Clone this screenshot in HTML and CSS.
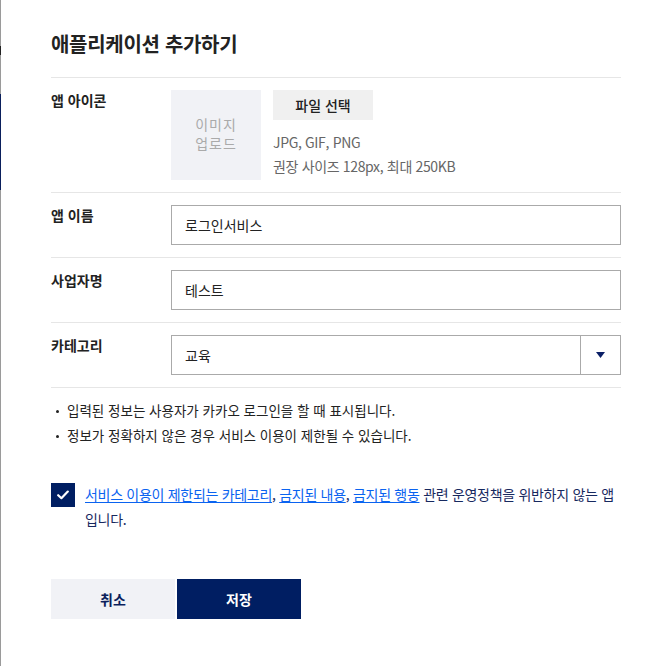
FILE: index.html
```html
<!DOCTYPE html>
<html lang="ko">
<head>
<meta charset="utf-8">
<title>애플리케이션 추가하기</title>
<link rel="stylesheet" href="styles.css">
</head>
<body>
<div class="page">
  <div class="edge"></div>
  <div class="modal">
    <h1 class="title">애플리케이션 추가하기</h1>

    <div class="row">
      <div class="label">앱 아이콘</div>
      <div class="field icon-field">
        <div class="upload">이미지<br>업로드</div>
        <div class="file-info">
          <button class="file-btn" type="button">파일 선택</button>
          <p class="hint">JPG, GIF, PNG<br>권장 사이즈 128px, 최대 250KB</p>
        </div>
      </div>
    </div>

    <div class="row">
      <div class="label">앱 이름</div>
      <div class="field"><div class="input">로그인서비스</div></div>
    </div>

    <div class="row">
      <div class="label">사업자명</div>
      <div class="field"><div class="input">테스트</div></div>
    </div>

    <div class="row">
      <div class="label">카테고리</div>
      <div class="field">
        <div class="select">
          <span class="select-value">교육</span>
          <span class="select-arrow"><svg width="9" height="6" viewBox="0 0 9 6"><path d="M0 0H9L4.5 6Z" fill="#0a1f66"/></svg></span>
        </div>
      </div>
    </div>

    <ul class="notes">
      <li>입력된 정보는 사용자가 카카오 로그인을 할 때 표시됩니다.</li>
      <li>정보가 정확하지 않은 경우 서비스 이용이 제한될 수 있습니다.</li>
    </ul>

    <div class="agree">
      <span class="check"><svg width="12" height="10" viewBox="0 0 12 10"><path d="M1.2 5.2L4.4 8.2L10.8 1.6" fill="none" stroke="#fff" stroke-width="2.2" stroke-linecap="round" stroke-linejoin="round"/></svg></span>
      <p class="agree-text"><a href="#">서비스 이용이 제한되는 카테고리</a>, <a href="#">금지된 내용</a>, <a href="#">금지된 행동</a> 관련 운영정책을 위반하지 않는 앱입니다.</p>
    </div>

    <div class="actions">
      <button class="btn btn-cancel" type="button">취소</button>
      <button class="btn btn-save" type="button">저장</button>
    </div>
  </div>
</div>
</body>
</html>
```

FILE: styles.css
```css
* { box-sizing: border-box; }
html, body { margin: 0; padding: 0; background: #fff; }
body {
  font-family: "Noto Sans CJK KR", "Noto Sans", sans-serif;
  color: #222;
  width: 671px;
  height: 666px;
  overflow: hidden;
}
.page { display: flex; height: 666px; }
.edge {
  width: 1px;
  flex: none;
  background: linear-gradient(to bottom,
    #9a9a9a 0, #9a9a9a 46px, #222 46px, #222 55px, #9a9a9a 55px, #9a9a9a 94px,
    #0a1f5c 94px, #0a1f5c 190px, #9a9a9a 190px, #9a9a9a 100%);
}
.modal {
  flex: 1;
  padding: 29px 50px 0 50px;
}
.title {
  margin: 0 0 18px;
  font-size: 20px;
  line-height: 30px;
  font-weight: 700;
  color: #222;
  letter-spacing: -0.3px;
}
.row {
  display: flex;
  border-top: 1px solid #e6e6e6;
  padding: 12px 0;
}
.label {
  width: 120px;
  flex: none;
  font-size: 14px;
  line-height: 20px;
  font-weight: 700;
}
.field { flex: 1; }
.icon-field { display: flex; gap: 12px; }
.upload {
  width: 90px;
  height: 90px;
  padding-bottom: 3px;
  background: #f1f2f6;
  color: #aaa;
  font-size: 14px;
  line-height: 19px;
  display: flex;
  align-items: center;
  justify-content: center;
  text-align: center;
  letter-spacing: 1px;
}
.file-info { display: flex; flex-direction: column; }
.file-btn {
  width: 100px;
  height: 30px;
  border: 0;
  background: #f0f0f0;
  font-family: inherit;
  font-size: 14px;
  font-weight: 500;
  color: #222;
  padding: 0;
}
.hint {
  margin: 10px 0 0;
  font-size: 14px;
  line-height: 24px;
  color: #666;
  letter-spacing: -0.35px;
}
.input, .select {
  height: 40px;
  border: 1px solid #aaa;
  font-size: 14px;
  line-height: 38px;
  padding: 0 13px;
  color: #222;
}
.select {
  display: flex;
  padding: 0 0 0 13px;
}
.select-value { flex: 1; }
.select-arrow {
  width: 40px;
  border-left: 1px solid #aaa;
  display: flex;
  align-items: center;
  justify-content: center;
}
.notes {
  list-style: none;
  margin: 0;
  padding: 10px 0 0;
  border-top: 1px solid #e6e6e6;
}
.notes li {
  position: relative;
  padding-left: 16px;
  font-size: 13.5px;
  line-height: 25px;
  color: #222;
}
.notes li::before {
  content: "";
  position: absolute;
  left: 5px;
  top: 12px;
  width: 3px;
  height: 3px;
  background: #222;
  border-radius: 50%;
}
.agree {
  display: flex;
  gap: 10px;
  margin-top: 34px;
}
.check {
  width: 24px;
  height: 24px;
  flex: none;
  background: #001e62;
  display: flex;
  align-items: center;
  justify-content: center;
  margin-top: 1px;
}
.agree-text {
  margin: 0;
  padding-right: 5px;
  font-size: 14px;
  line-height: 25px;
  color: #17295f;
  letter-spacing: -0.3px;
  word-break: break-all;
}
.agree-text a {
  color: #0a63f0;
  text-decoration: underline;
  text-underline-offset: 2px;
}
.actions {
  display: flex;
  gap: 2px;
  margin-top: 47px;
}
.btn {
  width: 124px;
  height: 40px;
  border: 0;
  font-family: inherit;
  font-size: 14px;
  font-weight: 700;
  padding: 0;
}
.btn-cancel { background: #f1f2f6; color: #0b1f5c; }
.btn-save { background: #001e62; color: #fff; }
```
